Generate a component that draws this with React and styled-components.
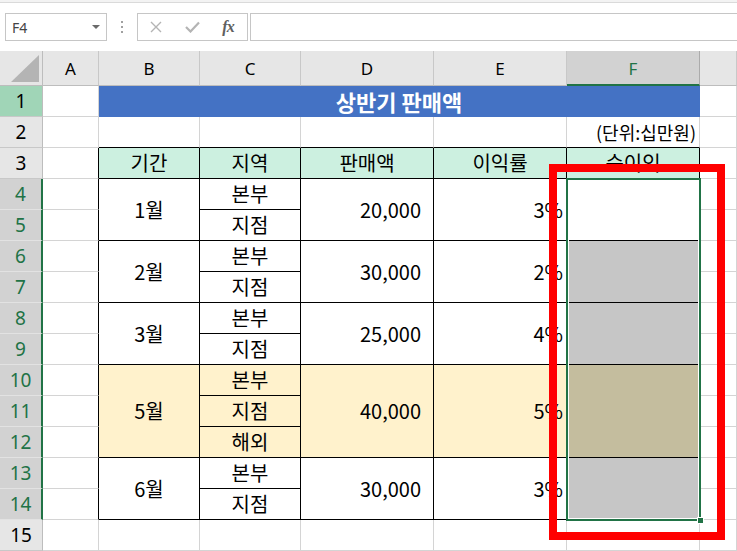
import styled, { createGlobalStyle } from 'styled-components';

const GlobalStyle = createGlobalStyle`
  html, body {
    margin: 0;
    padding: 0;
    background: #ffffff;
    overflow: hidden;
  }
  body {
    font-family: "Noto Sans CJK KR", "Noto Sans", sans-serif;
  }
`;

const GRID = '#d4d4d4';
const BLACK = '#000000';
const GREEN = '#217346';

const Window = styled.div`
  width: 737px;
  height: 551px;
  display: flex;
  flex-direction: column;
  background: #ffffff;
  overflow: hidden;
`;

const TopStrip = styled.div`
  height: 3px;
  background: #f3f3f3;
  border-bottom: 1px solid #dadada;
`;

const FormulaRow = styled.div`
  display: flex;
  align-items: center;
  height: 28px;
  padding: 10px 0;
`;

const NameBox = styled.div`
  box-sizing: border-box;
  margin-left: 5px;
  width: 102px;
  height: 28px;
  border: 1px solid #c6c6c6;
  display: flex;
  align-items: center;
  justify-content: space-between;
  padding: 0 6px 0 6px;
  font-family: "Noto Sans", "Liberation Sans", sans-serif;
  font-size: 14px;
  color: #444;
`;

const DropArrow = styled.span`
  width: 0;
  height: 0;
  border-left: 4px solid transparent;
  border-right: 4px solid transparent;
  border-top: 4px solid #6a6a6a;
`;

const Grip = styled.div`
  width: 30px;
  display: flex;
  flex-direction: column;
  align-items: center;
  gap: 3px;
  span {
    width: 2px;
    height: 2px;
    background: #a0a0a0;
  }
`;

const FxBox = styled.div`
  box-sizing: border-box;
  width: 111px;
  height: 28px;
  border: 1px solid #c6c6c6;
  display: flex;
  align-items: center;
`;

const FxSlot = styled.div`
  width: 36px;
  display: flex;
  justify-content: center;
  align-items: center;
  color: #b4b4b4;
`;

const FxText = styled.span`
  font-family: "Liberation Serif", "DejaVu Serif", serif;
  font-style: italic;
  font-weight: 700;
  font-size: 16px;
  color: #606060;
  letter-spacing: -1px;
`;

const FormulaInput = styled.div`
  box-sizing: border-box;
  flex: 1;
  margin-left: 2px;
  height: 28px;
  border: 1px solid #c6c6c6;
  border-right: none;
`;

const Sheet = styled.div`
  position: relative;
  display: grid;
  grid-template-columns: 43px 56px 101px 101px 133px 133px 133px 1fr;
  grid-template-rows: 35px repeat(15, 31px);
`;

const Corner = styled.div`
  grid-row: 1;
  grid-column: 1;
  box-sizing: border-box;
  background: #e6e6e6;
  border-right: 1px solid #bdbdbd;
  border-bottom: 1px solid #bdbdbd;
  display: flex;
  align-items: flex-end;
  justify-content: flex-end;
  padding: 0 3px 3px 0;
`;

const ColHead = styled.div`
  grid-row: 1;
  grid-column: ${(p) => p.$col};
  box-sizing: border-box;
  background: ${(p) => (p.$active ? '#d2d2d2' : '#e6e6e6')};
  color: ${(p) => (p.$active ? GREEN : '#000')};
  border-right: 1px solid ${(p) => (p.$active ? '#ababab' : '#c8c8c8')};
  border-bottom: ${(p) => (p.$active ? `2px solid ${GREEN}` : '1px solid #bdbdbd')};
  display: flex;
  align-items: center;
  justify-content: center;
  padding-top: 1px;
  font-family: "Noto Sans", "Open Sans", sans-serif;
  font-size: 17px;
`;

const headBg = { normal: '#e6e6e6', sel: '#d2d2d2', title: '#a0d5b7' };

const RowHead = styled.div`
  grid-row: ${(p) => p.$row};
  grid-column: 1;
  box-sizing: border-box;
  background: ${(p) => headBg[p.$state]};
  color: ${(p) => (p.$state === 'sel' ? GREEN : '#000')};
  border-bottom: 1px solid ${(p) => (p.$state === 'sel' ? '#e2e2e2' : '#c8c8c8')};
  border-right: ${(p) => (p.$state === 'sel' ? `2px solid ${GREEN}` : '1px solid #bdbdbd')};
  display: flex;
  align-items: center;
  justify-content: center;
  font-family: "Noto Sans", "Open Sans", sans-serif;
  font-size: 19px;
`;

const Cell = styled.div`
  grid-row: ${(p) => p.$row} / span ${(p) => p.$rs || 1};
  grid-column: ${(p) => p.$col} / span ${(p) => p.$cs || 1};
  box-sizing: border-box;
  background: ${(p) => p.$bg || '#ffffff'};
  border-right: 1px solid ${(p) => p.$r || GRID};
  border-bottom: 1px solid ${(p) => p.$b || GRID};
  display: flex;
  align-items: center;
  justify-content: ${(p) => p.$align || 'center'};
  padding: 0 ${(p) => p.$pad || 3}px;
  color: ${(p) => p.$color || '#000'};
  font-weight: ${(p) => (p.$bold ? 700 : 400)};
  font-size: ${(p) => p.$size || 20}px;
  white-space: nowrap;
  line-height: 1;
`;

const Selection = styled.div`
  grid-row: 5 / 16;
  grid-column: 7;
  margin: -1px;
  position: relative;
  border: 2px solid ${GREEN};
  box-shadow: inset 0 0 0 1px #ffffff;
  pointer-events: none;
`;

const FillHandle = styled.span`
  position: absolute;
  right: -5px;
  bottom: -5px;
  width: 5px;
  height: 5px;
  background: ${GREEN};
  border: 1px solid #ffffff;
`;

const Callout = styled.div`
  position: absolute;
  left: -19px;
  top: -16px;
  width: 176px;
  height: 376px;
  box-sizing: border-box;
  border: 8px solid #ff0000;
`;

const groups = [
  { label: '1월', start: 4, regions: ['본부', '지점'], sales: '20,000', rate: '3%', f: '#ffffff' },
  { label: '2월', start: 6, regions: ['본부', '지점'], sales: '30,000', rate: '2%', f: '#c6c6c6' },
  { label: '3월', start: 8, regions: ['본부', '지점'], sales: '25,000', rate: '4%', f: '#c6c6c6' },
  { label: '5월', start: 10, regions: ['본부', '지점', '해외'], sales: '40,000', rate: '5%', f: '#c4bd9e', bg: '#fff2cc' },
  { label: '6월', start: 13, regions: ['본부', '지점'], sales: '30,000', rate: '3%', f: '#c6c6c6' },
];

const headers = ['기간', '지역', '판매액', '이익률', '순이익'];
const letters = ['A', 'B', 'C', 'D', 'E', 'F'];

function rowState(n) {
  if (n === 1) return 'title';
  if (n >= 4 && n <= 14) return 'sel';
  return 'normal';
}

export default function App() {
  const rowNums = Array.from({ length: 15 }, (_, i) => i + 1);

  return (
    <Window>
      <GlobalStyle />
      <TopStrip />
      <FormulaRow>
        <NameBox>
          F4
          <DropArrow />
        </NameBox>
        <Grip>
          <span />
          <span />
          <span />
        </Grip>
        <FxBox>
          <FxSlot>
            <svg width="12" height="12" viewBox="0 0 12 12">
              <path d="M1 1 L11 11 M11 1 L1 11" stroke="currentColor" strokeWidth="1.4" fill="none" />
            </svg>
          </FxSlot>
          <FxSlot>
            <svg width="15" height="12" viewBox="0 0 15 12">
              <path d="M1 6 L5.5 10.5 L14 1.5" stroke="currentColor" strokeWidth="2.2" fill="none" />
            </svg>
          </FxSlot>
          <FxSlot>
            <FxText>fx</FxText>
          </FxSlot>
        </FxBox>
        <FormulaInput />
      </FormulaRow>

      <Sheet>
        <Corner>
          <svg width="28" height="27" viewBox="0 0 28 27">
            <polygon points="0,27 28,27 28,0" fill="#b4b4b4" />
          </svg>
        </Corner>
        {letters.map((l, i) => (
          <ColHead key={l} $col={i + 2} $active={l === 'F'}>
            {l}
          </ColHead>
        ))}
        <ColHead $col={8} />

        {rowNums.map((n) => (
          <RowHead key={n} $row={n + 1} $state={rowState(n)}>
            {n}
          </RowHead>
        ))}

        {/* column A and G */}
        {rowNums.map((n) => (
          <Cell key={`a${n}`} $row={n + 1} $col={2} $r={n >= 3 && n <= 14 ? BLACK : GRID} />
        ))}
        {rowNums.map((n) => (
          <Cell key={`g${n}`} $row={n + 1} $col={8} />
        ))}

        {/* title */}
        <Cell $row={2} $col={3} $cs={5} $bg="#4472c4" $r="#4472c4" $b="#4472c4" $color="#ffffff" $bold $size={22}>
          상반기 판매액
        </Cell>

        {/* row 2 */}
        {[3, 4, 5, 6].map((c) => (
          <Cell key={`r2${c}`} $row={3} $col={c} $b={BLACK} />
        ))}
        <Cell $row={3} $col={7} $b={BLACK} $align="flex-end" $size={18} $pad={3}>
          (단위:십만원)
        </Cell>

        {/* header row 3 */}
        {headers.map((h, i) => (
          <Cell key={h} $row={4} $col={i + 3} $bg="#ccf0e0" $r={BLACK} $b={BLACK}>
            {h}
          </Cell>
        ))}

        {/* data groups */}
        {groups.map((g) => {
          const span = g.regions.length;
          const r = g.start + 1;
          return [
            <Cell key={`${g.label}b`} $row={r} $rs={span} $col={3} $bg={g.bg} $r={BLACK} $b={BLACK}>
              {g.label}
            </Cell>,
            ...g.regions.map((reg, i) => (
              <Cell key={`${g.label}c${i}`} $row={r + i} $col={4} $bg={g.bg} $r={BLACK} $b={BLACK}>
                {reg}
              </Cell>
            )),
            <Cell key={`${g.label}d`} $row={r} $rs={span} $col={5} $bg={g.bg} $r={BLACK} $b={BLACK} $align="flex-end" $pad={12}>
              {g.sales}
            </Cell>,
            <Cell key={`${g.label}e`} $row={r} $rs={span} $col={6} $bg={g.bg} $r={BLACK} $b={BLACK} $align="flex-end" $pad={3}>
              {g.rate}
            </Cell>,
            <Cell key={`${g.label}f`} $row={r} $rs={span} $col={7} $bg={g.f} $r={BLACK} $b={BLACK} />,
          ];
        })}

        {/* row 15 */}
        {[3, 4, 5, 6, 7].map((c) => (
          <Cell key={`r15${c}`} $row={16} $col={c} />
        ))}

        <Selection>
          <FillHandle />
          <Callout />
        </Selection>
      </Sheet>
    </Window>
  );
}
